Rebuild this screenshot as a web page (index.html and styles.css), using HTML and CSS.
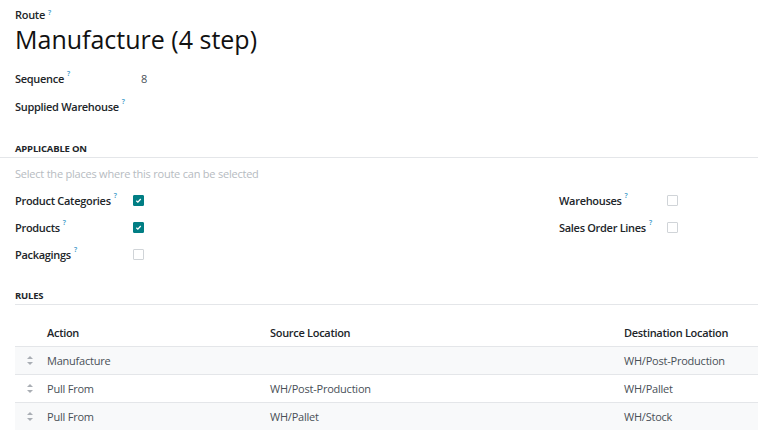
FILE: index.html
```html
<!DOCTYPE html>
<html>
<head>
<meta charset="utf-8">
<link rel="stylesheet" href="styles.css">
</head>
<body>
<div class="sheet">
  <div class="route-label">Route<sup class="q">?</sup></div>
  <h1 class="title">Manufacture (4 step)</h1>
  <div class="field-row first">
    <div class="lbl">Sequence<sup class="q">?</sup></div>
    <div class="val">8</div>
  </div>
  <div class="field-row">
    <div class="lbl">Supplied Warehouse<sup class="q">?</sup></div>
    <div class="val"></div>
  </div>

  <div class="sep-title full">APPLICABLE ON</div>
  <div class="desc">Select the places where this route can be selected</div>
  <div class="applic">
    <div class="col">
      <div class="crow"><div class="clbl">Product Categories<sup class="q">?</sup></div><span class="cb on"><svg viewBox="0 0 10 10" width="10" height="10"><path d="M2.6 5.2 L4.3 6.8 L7.5 3.4" fill="none" stroke="#fff" stroke-width="1.5"/></svg></span></div>
      <div class="crow"><div class="clbl">Products<sup class="q">?</sup></div><span class="cb on"><svg viewBox="0 0 10 10" width="10" height="10"><path d="M2.6 5.2 L4.3 6.8 L7.5 3.4" fill="none" stroke="#fff" stroke-width="1.5"/></svg></span></div>
      <div class="crow"><div class="clbl">Packagings<sup class="q">?</sup></div><span class="cb"></span></div>
    </div>
    <div class="col right">
      <div class="crow"><div class="clbl">Warehouses<sup class="q">?</sup></div><span class="cb"></span></div>
      <div class="crow"><div class="clbl">Sales Order Lines<sup class="q">?</sup></div><span class="cb"></span></div>
    </div>
  </div>

  <div class="sep-title rules">RULES</div>
  <table class="rules-table">
    <thead>
      <tr><th class="h"></th><th class="c-act">Action</th><th class="c-src">Source Location</th><th class="c-dst">Destination Location</th></tr>
    </thead>
    <tbody>
      <tr class="odd"><td class="h"><span class="handle"></span></td><td>Manufacture</td><td></td><td>WH/Post-Production</td></tr>
      <tr><td class="h"><span class="handle"></span></td><td>Pull From</td><td>WH/Post-Production</td><td>WH/Pallet</td></tr>
      <tr class="odd"><td class="h"><span class="handle"></span></td><td>Pull From</td><td>WH/Pallet</td><td>WH/Stock</td></tr>
    </tbody>
  </table>
</div>
</body>
</html>
```
FILE: styles.css
```css
html, body {
  margin: 0;
  padding: 0;
  background: #fff;
}
body {
  font-family: "Open Sans", "Noto Sans", sans-serif;
  font-size: 11px;
  letter-spacing: -0.22px;
  color: #212529;
}
.sheet {
  padding: 8px 0 0 15px;
}
.q {
  color: #3a97c8;
  font-size: 7px;
  font-weight: 600;
  margin-left: 3px;
  vertical-align: top;
  position: relative;
  top: -2px;
  letter-spacing: 0;
}
.route-label {
  font-weight: 600;
  line-height: 14px;
  letter-spacing: -0.3px;
}
.title {
  font-weight: 400;
  font-size: 25px;
  line-height: 34px;
  margin: 0;
  color: #111;
  letter-spacing: 0;
}
.field-row {
  display: flex;
  height: 28px;
  align-items: center;
}
.field-row.first {
  margin-top: 8px;
}
.lbl {
  width: 126px;
  font-weight: 600;
  letter-spacing: -0.3px;
}
.val {
  color: #495057;
}
.sep-title {
  font-weight: 700;
  font-size: 9.5px;
  letter-spacing: -0.2px;
  text-transform: uppercase;
  border-bottom: 1px solid #e4e6e9;
  padding-bottom: 1px;
  line-height: 14px;
}
.sep-title.full {
  margin-top: 22px;
  margin-left: -15px;
  padding-left: 15px;
}
.desc {
  color: #b6bbc1;
  margin-top: 8px;
  line-height: 16px;
}
.applic {
  display: flex;
  margin-top: 5px;
}
.col {
  width: 544px;
}
.col.right {
  width: auto;
}
.crow {
  display: flex;
  align-items: center;
  height: 27px;
}
.clbl {
  width: 118px;
  font-weight: 600;
  letter-spacing: -0.3px;
}
.col.right .clbl {
  width: 108px;
}
.cb {
  width: 9px;
  height: 9px;
  border: 1px solid #d0d4d8;
  border-radius: 1px;
  display: inline-flex;
  align-items: center;
  justify-content: center;
  background: #fff;
}
.cb svg {
  width: 9px;
  height: 9px;
}
.cb.on {
  background: #017e84;
  border-color: #017e84;
}
.sep-title.rules {
  margin-top: 21px;
}
.rules-table {
  width: 743px;
  border-collapse: collapse;
  margin-top: 14px;
}
.rules-table th {
  text-align: left;
  font-weight: 600;
  letter-spacing: -0.3px;
  height: 27px;
  padding: 0;
  border-bottom: 1px solid #e4e6e9;
}
.rules-table td {
  height: 27px;
  padding: 0;
  color: #495057;
  border-bottom: 1px solid #e4e6e9;
}
.rules-table tr.odd td {
  background: #f8f9fa;
}
.rules-table tbody tr:last-child td {
  border-bottom: none;
}
.h {
  width: 32px;
}
.c-act {
  width: 223px;
}
.c-src {
  width: 354px;
}
.handle {
  display: block;
  margin-left: 12px;
  width: 7px;
  height: 9px;
  position: relative;
}
.handle::before, .handle::after {
  content: "";
  position: absolute;
  left: 0;
  border-left: 3.5px solid transparent;
  border-right: 3.5px solid transparent;
}
.handle::before {
  top: 0;
  border-bottom: 3.5px solid #a9aeb4;
}
.handle::after {
  bottom: 0;
  border-top: 3.5px solid #a9aeb4;
}
```
